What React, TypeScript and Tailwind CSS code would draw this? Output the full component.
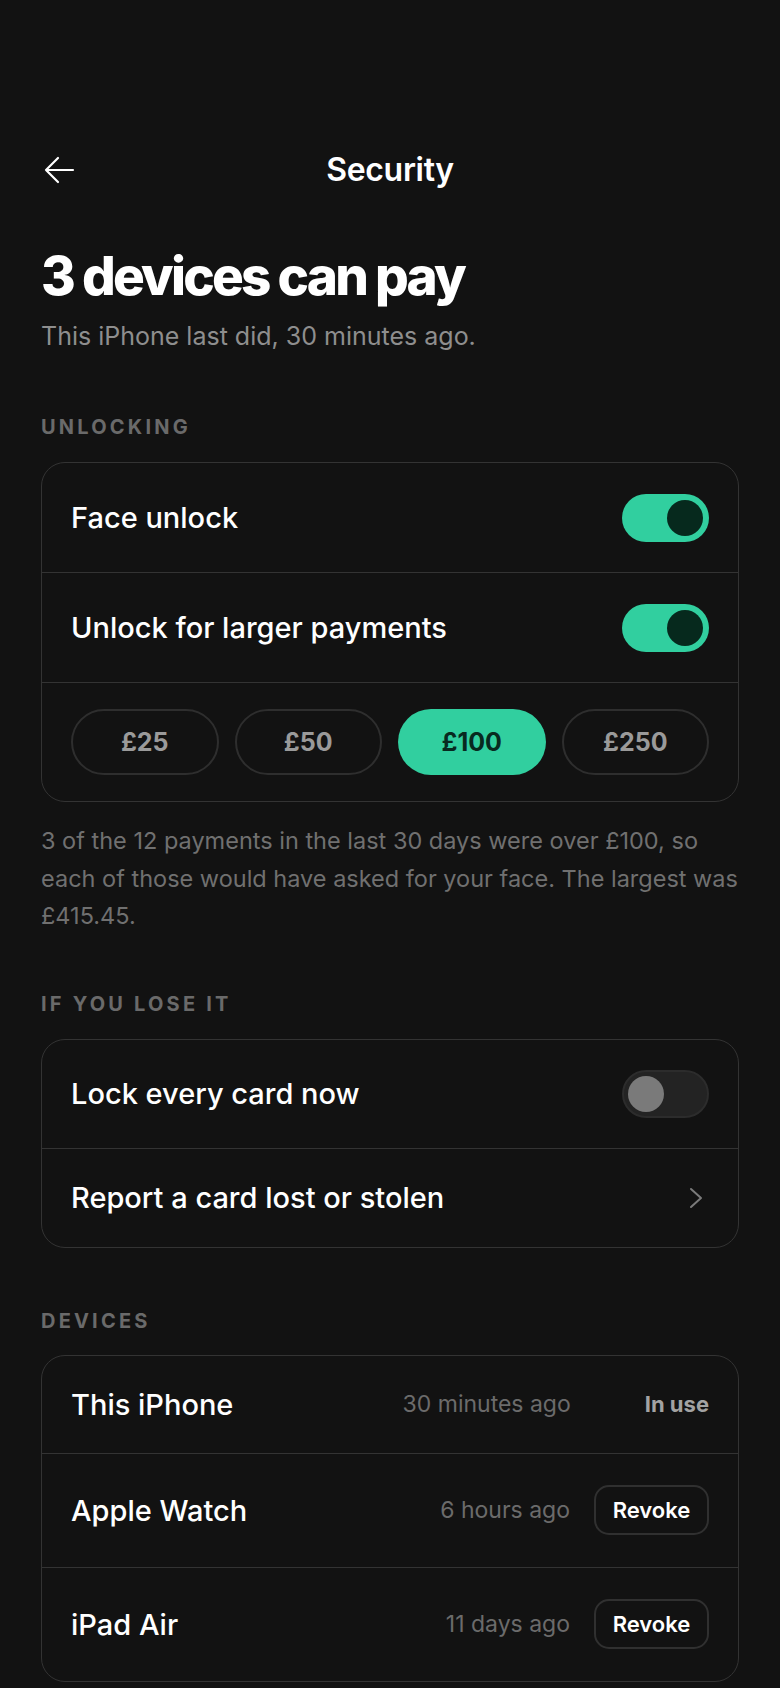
import { useState } from 'react';

const TEAL = 'bg-[#31cf9f]';

function Toggle({ on, onChange }: { on: boolean; onChange: () => void }) {
  return (
    <button
      type="button"
      onClick={onChange}
      className={`flex h-[48px] w-[87px] shrink-0 items-center rounded-full ${
        on ? `${TEAL} justify-end px-[6px]` : 'justify-start border-2 border-[#2c2c2c] bg-[#232323] px-[4px]'
      }`}
    >
      <span className={`block h-[36px] w-[36px] rounded-full ${on ? 'bg-[#06291d]' : 'bg-[#7a7a7a]'}`} />
    </button>
  );
}

function SectionLabel({ children }: { children: string }) {
  return (
    <p className="text-[20px] font-bold uppercase leading-[24px] tracking-[0.16em] text-[#6a6a6a]">{children}</p>
  );
}

const limits = [25, 50, 100, 250];

const devices = [
  { name: 'This iPhone', seen: '30 minutes ago', current: true },
  { name: 'Apple Watch', seen: '6 hours ago', current: false },
  { name: 'iPad Air', seen: '11 days ago', current: false },
];

export default function App() {
  const [faceUnlock, setFaceUnlock] = useState(true);
  const [largeUnlock, setLargeUnlock] = useState(true);
  const [locked, setLocked] = useState(false);
  const [limit, setLimit] = useState(100);

  return (
    <div
      className="min-h-[1688px] bg-[#121212] px-[41px] pb-10 pt-[140px] text-white"
      style={{ fontFamily: 'Inter, "Noto Sans", sans-serif' }}
    >
      <header className="grid h-[60px] grid-cols-[1fr_auto_1fr] items-center">
        <button type="button" className="ml-[3px] flex w-[40px] items-center">
          <svg width="31" height="28" viewBox="0 0 31 28" fill="none" stroke="white" strokeWidth="2.2" strokeLinecap="round" strokeLinejoin="round">
            <path d="M14 2 2 14l12 12M2 14h27" />
          </svg>
        </button>
        <h2 className="text-[32px] font-semibold tracking-[-0.01em]">Security</h2>
        <div />
      </header>

      <h1 className="mt-[47px] text-[53px] font-extrabold leading-[1.1] tracking-[-0.052em]">3 devices can pay</h1>
      <p className="mt-[15px] text-[25px] leading-[32px] text-[#8e8e8e]">This iPhone last did, 30 minutes ago.</p>

      <div className="mt-[63px]">
        <SectionLabel>Unlocking</SectionLabel>
      </div>
      <section className="mt-[23px] overflow-hidden rounded-[24px] border border-[#333333]">
        <div className="flex h-[109px] items-center justify-between px-[29px]">
          <span className="text-[29px] font-medium">Face unlock</span>
          <Toggle on={faceUnlock} onChange={() => setFaceUnlock(!faceUnlock)} />
        </div>
        <div className="flex h-[110px] items-center justify-between border-t border-[#333333] px-[29px]">
          <span className="text-[29px] font-medium">Unlock for larger payments</span>
          <Toggle on={largeUnlock} onChange={() => setLargeUnlock(!largeUnlock)} />
        </div>
        <div className="grid grid-cols-4 gap-[16px] border-t border-[#333333] px-[29px] pb-[26px] pt-[26px]">
          {limits.map((v) => (
            <button
              key={v}
              type="button"
              onClick={() => setLimit(v)}
              className={`h-[66px] rounded-full text-[25px] font-bold ${
                limit === v ? `${TEAL} text-[#082a1f]` : 'border-2 border-[#2e2e2e] text-[#9a9a9a]'
              }`}
            >
              £{v}
            </button>
          ))}
        </div>
      </section>
      <p className="mt-[20px] text-[23.5px] leading-[37.5px] text-[#707070]">
        3 of the 12 payments in the last 30 days were over £100, so each of those would have asked for your face. The
        largest was £415.45.
      </p>

      <div className="mt-[57px]">
        <SectionLabel>If you lose it</SectionLabel>
      </div>
      <section className="mt-[23px] overflow-hidden rounded-[24px] border border-[#333333]">
        <div className="flex h-[108px] items-center justify-between px-[29px]">
          <span className="text-[29px] font-medium">Lock every card now</span>
          <Toggle on={locked} onChange={() => setLocked(!locked)} />
        </div>
        <div className="flex h-[99px] items-center justify-between border-t border-[#333333] px-[29px]">
          <span className="text-[29px] font-medium">Report a card lost or stolen</span>
          <svg width="14" height="22" viewBox="0 0 14 22" fill="none" stroke="#7a7a7a" strokeWidth="2" strokeLinecap="round" strokeLinejoin="round" className="mr-[6px]">
            <path d="M2 2l10 9-10 9" />
          </svg>
        </div>
      </section>

      <div className="mt-[61px]">
        <SectionLabel>Devices</SectionLabel>
      </div>
      <section className="mt-[22px] overflow-hidden rounded-[24px] border border-[#333333]">
        {devices.map((d, i) => (
          <div
            key={d.name}
            className={`flex items-center px-[29px] ${d.current ? 'h-[97px]' : 'h-[114px]'} ${
              i > 0 ? 'border-t border-[#333333]' : ''
            }`}
          >
            <span className="flex-1 text-[29px] font-medium">{d.name}</span>
            <span className="text-[23px] text-[#6b6b6b]">{d.seen}</span>
            {d.current ? (
              <span className="ml-[74px] text-[22px] font-bold text-[#a3a3a3]">In use</span>
            ) : (
              <button
                type="button"
                className="ml-[24px] h-[50px] w-[115px] rounded-[15px] border-2 border-[#303030] text-[22px] font-semibold"
              >
                Revoke
              </button>
            )}
          </div>
        ))}
      </section>
    </div>
  );
}
